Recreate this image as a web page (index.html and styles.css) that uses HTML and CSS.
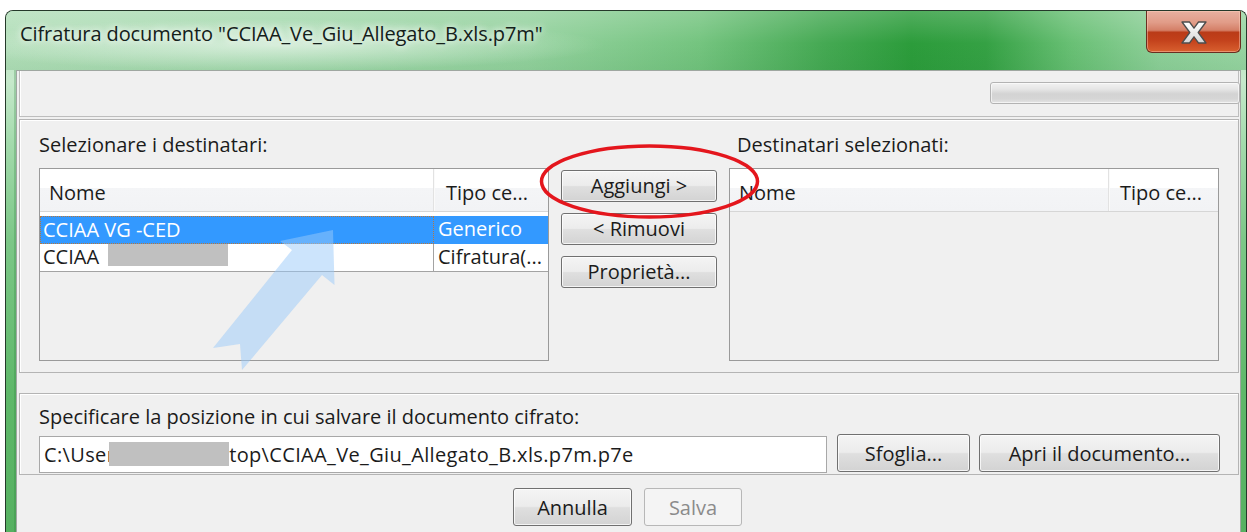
FILE: index.html
```html
<!DOCTYPE html>
<html lang="it">
<head>
<meta charset="utf-8">
<title>Cifratura documento</title>
<link rel="stylesheet" href="styles.css">
</head>
<body>
<div class="window">
  <div class="titlebar">
    <span class="title">Cifratura documento "CCIAA_Ve_Giu_Allegato_B.xls.p7m"</span>
    <button class="close" type="button" aria-label="Chiudi">
      <svg width="26" height="23" viewBox="0 0 26 23">
        <defs>
          <linearGradient id="xfill" x1="0" y1="0" x2="0" y2="1">
            <stop offset="0" stop-color="#ffffff"/>
            <stop offset="1" stop-color="#d6d6d6"/>
          </linearGradient>
        </defs>
        <polygon points="1,1 8.5,1 13,7.2 17.5,1 25,1 17.2,11.5 25,22 17.5,22 13,15.8 8.5,22 1,22 8.8,11.5" fill="url(#xfill)" stroke="#4d4d4d" stroke-width="1.3" stroke-linejoin="round"/>
      </svg>
    </button>
  </div>
  <div class="frame">
    <div class="content">
      <div class="status-panel">
        <div class="progress"></div>
      </div>

      <div class="recipients-panel">
        <div class="col col-left">
          <div class="label">Selezionare i destinatari:</div>
          <div class="table">
            <div class="thead">
              <div class="th th-name">Nome</div>
              <div class="th th-type">Tipo ce...</div>
            </div>
            <div class="tbody">
              <div class="tr selected">
                <div class="td td-name focus">CCIAA VG -CED</div>
                <div class="td td-type">Generico</div>
              </div>
              <div class="tr">
                <div class="td td-name">CCIAA<span class="redacted redacted-row"></span></div>
                <div class="td td-type">Cifratura(...</div>
              </div>
            </div>
          </div>
        </div>

        <div class="actions">
          <button class="btn btn-sm" type="button">Aggiungi &gt;</button>
          <button class="btn btn-sm" type="button">&lt; Rimuovi</button>
          <button class="btn btn-sm" type="button">Proprietà...</button>
        </div>

        <div class="col col-right">
          <div class="label label-right">Destinatari selezionati:</div>
          <div class="table">
            <div class="thead">
              <div class="th th-name th-name-right">Nome</div>
              <div class="th th-type th-type-right">Tipo ce...</div>
            </div>
            <div class="tbody"></div>
          </div>
        </div>
      </div>

      <div class="save-panel">
        <div class="label">Specificare la posizione in cui salvare il documento cifrato:</div>
        <div class="save-row">
          <div class="path-field"><span>C:\User</span><span class="redacted redacted-path"></span><span>top\CCIAA_Ve_Giu_Allegato_B.xls.p7m.p7e</span></div>
          <button class="btn btn-browse" type="button">Sfoglia...</button>
          <button class="btn btn-open" type="button">Apri il documento...</button>
        </div>
      </div>

      <div class="footer">
        <button class="btn btn-cancel" type="button">Annulla</button>
        <button class="btn btn-save" type="button" disabled>Salva</button>
      </div>
    </div>
  </div>
</div>

<svg class="marks" width="1247" height="532" viewBox="0 0 1247 532">
  <polygon class="pointer" points="333,230 334.5,285 322,275 242,370 240,344 213,348 292,250 280,241"/>
  <ellipse class="ring" cx="649.5" cy="181.5" rx="108" ry="35.5"/>
</svg>
</body>
</html>
```

FILE: styles.css
```css
* {
  box-sizing: border-box;
}

html,
body {
  margin: 0;
  padding: 0;
}

body {
  width: 1247px;
  height: 532px;
  overflow: hidden;
  position: relative;
  background: #ffffff;
  font-family: "Open Sans", "Noto Sans", sans-serif;
  font-size: 20px;
  color: #1b1b1b;
}

button {
  font: inherit;
  color: inherit;
}

/* ---------- window frame ---------- */

.window {
  margin: 10px 0 0 5px;
  height: 540px;
  border: 1px solid #25392a;
  border-bottom: none;
  border-radius: 8px 8px 0 0;
  overflow: hidden;
  display: flex;
  flex-direction: column;
  background: linear-gradient(180deg,
      #b7e1bd 0px,
      #c6e9cb 70px,
      #a4dbad 130px,
      #7cc787 230px,
      #5fb86a 380px,
      #55b060 540px);
}

.titlebar {
  flex: none;
  height: 59px;
  display: flex;
  align-items: flex-start;
  padding-left: 14px;
  background:
    radial-gradient(ellipse 330px 26px at 270px 34px, rgba(255, 255, 255, 0.55), rgba(255, 255, 255, 0) 100%),
    linear-gradient(180deg, rgba(255, 255, 255, 0.18) 0%, rgba(255, 255, 255, 0) 55%, rgba(20, 110, 40, 0.08) 100%),
    linear-gradient(90deg,
      #b3dfba 0%,
      #a5d9ae 22%,
      #95d29f 42%,
      #74c47f 56%,
      #45a953 66%,
      #2c9c3b 73%,
      #35a144 79%,
      #69c075 86%,
      #8fd09a 93%,
      #99d5a3 100%);
}

.title {
  padding-top: 11px;
  line-height: 24px;
  letter-spacing: -0.1px;
  white-space: nowrap;
  color: #14201a;
  text-shadow: 0 0 6px rgba(255, 255, 255, 0.9), 0 0 12px rgba(255, 255, 255, 0.7);
}

.close {
  margin-left: auto;
  margin-right: 5px;
  width: 95px;
  height: 42px;
  padding: 0;
  display: flex;
  align-items: center;
  justify-content: center;
  border: 1px solid #6a2e20;
  border-top: none;
  border-radius: 0 0 6px 6px;
  background: linear-gradient(180deg,
      #e8b0a0 0%,
      #e19c88 28%,
      #d47f67 47%,
      #ba3b18 52%,
      #c2401b 70%,
      #d8602f 100%);
  box-shadow: inset 0 0 0 1px rgba(255, 210, 190, 0.45);
}

.close svg {
  display: block;
  margin-top: 1px;
}

.frame {
  flex: 1;
  display: flex;
  padding: 0 5px 0 10px;
}

.content {
  flex: 1;
  display: flex;
  flex-direction: column;
  padding: 0 1px 0 2px;
  background: #f0f0f0;
  border: 1px solid #9fa7a1;
  border-bottom: none;
  box-shadow: -2px 0 0 rgba(40, 120, 55, 0.25);
}

/* ---------- panels ---------- */

.status-panel {
  height: 46px;
  display: flex;
  justify-content: flex-end;
  align-items: flex-start;
  border: 1px solid #bdbdbd;
  border-top: none;
  box-shadow: inset 1px 0 0 #ffffff;
}

.progress {
  margin-top: 11px;
  margin-right: -2px;
  width: 250px;
  height: 22px;
  border: 1px solid #b3b3b3;
  border-radius: 3px;
  background: linear-gradient(180deg,
      #f2f2f2 0%,
      #e6e6e6 30%,
      #d3d3d3 55%,
      #d6d6d6 80%,
      #e4e4e4 100%);
  box-shadow: inset 0 0 0 1px rgba(255, 255, 255, 0.6);
}

.recipients-panel {
  margin-top: 2px;
  display: flex;
  gap: 12px;
  padding: 13px 18px 11px 19px;
  border: 1px solid #b4b4b4;
  box-shadow: inset 1px 1px 0 #ffffff;
}

.label {
  height: 24px;
  line-height: 24px;
  white-space: nowrap;
}

.col {
  flex: none;
  display: flex;
  flex-direction: column;
  gap: 11px;
}

.col-left {
  width: 510px;
}

.col-right {
  width: 490px;
}

.label-right {
  padding-left: 8px;
}

/* ---------- tables ---------- */

.table {
  height: 193px;
  display: flex;
  flex-direction: column;
  background: #f0f0f0;
  border: 1px solid #9a9a9a;
}

.thead {
  flex: none;
  display: flex;
  height: 43px;
  border-bottom: 1px solid #d6d6d6;
  background: linear-gradient(180deg, #ffffff 0%, #ffffff 45%, #f4f5f7 45%, #f2f3f5 100%);
}

.th {
  padding-top: 5px;
  line-height: 37px;
  white-space: nowrap;
}

.th-name {
  width: 394px;
  padding-left: 9px;
  border-right: 1px solid #e2e2e2;
  box-shadow: 1px 0 0 #fafafa;
}

.th-type {
  flex: 1;
  padding-left: 12px;
}

.th-name-right {
  width: 379px;
}

.th-type-right {
  padding-left: 11px;
}

.tbody {
  flex: 1;
  display: flex;
  flex-direction: column;
  align-items: stretch;
}

.tr {
  display: flex;
  height: 28px;
  background: #ffffff;
  border-bottom: 1px solid #a3a3a3;
}

.tr.selected {
  background: #3399ff;
  color: #ffffff;
  border-bottom: none;
}

.tbody .tr.selected:first-child {
  border-top: 4px solid #ffffff;
  height: 32px;
}

.td {
  line-height: 26px;
  white-space: nowrap;
  overflow: hidden;
}

.td-name {
  width: 394px;
  padding-left: 3px;
  border-right: 1px solid #a3a3a3;
  display: flex;
  align-items: flex-start;
}

.td-name.focus {
  border: 1px dotted #b9773a;
  padding-left: 2px;
}

.td-type {
  flex: 1;
  padding-left: 4px;
}

.redacted {
  display: inline-block;
  flex: none;
  background: #c0c0c0;
}

.redacted-row {
  width: 120px;
  height: 23px;
  margin-left: 9px;
  margin-top: -1px;
}

/* ---------- buttons ---------- */

.btn {
  padding: 0;
  border: 1px solid #707070;
  border-radius: 3px;
  background: linear-gradient(180deg,
      #f4f4f4 0%,
      #ececec 48%,
      #dfdfdf 52%,
      #d3d3d3 100%);
  box-shadow: inset 0 0 0 1px rgba(255, 255, 255, 0.75);
  white-space: nowrap;
  color: #1b1b1b;
}

.actions {
  flex: none;
  width: 156px;
  display: flex;
  flex-direction: column;
  gap: 11px;
  padding-top: 37px;
}

.btn-sm {
  height: 32px;
  line-height: 28px;
}

/* ---------- save location ---------- */

.save-panel {
  margin-top: 20px;
  height: 82px;
  padding: 11px 18px 0 19px;
  border: 1px solid #b4b4b4;
  box-shadow: inset 1px 1px 0 #ffffff;
  display: flex;
  flex-direction: column;
  gap: 5px;
}

.save-row {
  height: 40px;
  display: flex;
  align-items: flex-start;
}

.path-field {
  flex: none;
  width: 788px;
  height: 37px;
  margin-top: 2px;
  padding-left: 4px;
  display: flex;
  align-items: center;
  background: #ffffff;
  border: 1px solid #a8a8a8;
  white-space: nowrap;
  overflow: hidden;
  letter-spacing: 0.35px;
}

.redacted-path {
  width: 120px;
  height: 24px;
  margin-left: -6px;
  margin-top: -2px;
}

.btn-browse {
  flex: none;
  width: 133px;
  height: 38px;
  margin-left: 10px;
}

.btn-open {
  flex: none;
  width: 241px;
  height: 38px;
  margin-left: 9px;
}

/* ---------- footer ---------- */

.footer {
  display: flex;
  justify-content: center;
  gap: 12px;
  padding: 13px 3px 0 0;
}

.btn-cancel {
  width: 119px;
  height: 38px;
}

.btn-save {
  width: 98px;
  height: 38px;
  border-color: #b7b7b7;
  background: #f4f4f4;
  box-shadow: none;
  color: #8b8b8b;
}

/* ---------- annotations drawn over the dialog ---------- */

.marks {
  position: absolute;
  left: 0;
  top: 0;
  pointer-events: none;
}

.pointer {
  fill: rgba(153, 201, 249, 0.5);
}

.ring {
  fill: none;
  stroke: #e4161d;
  stroke-width: 3.5;
}
```
